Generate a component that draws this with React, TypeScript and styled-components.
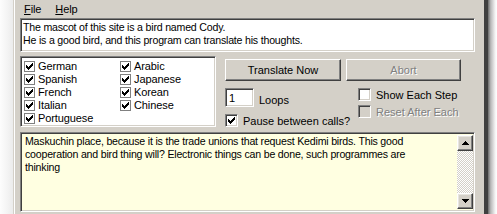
import React from 'react';
import styled, { createGlobalStyle, css } from 'styled-components';

const GlobalStyle = createGlobalStyle`
  html, body {
    margin: 0;
    padding: 0;
    background: #fff;
    overflow: hidden;
  }
  body {
    font-family: "Liberation Sans", Arial, sans-serif;
    font-size: 11px;
    color: #000;
  }
`;

const sunken = css`
  border: 1px solid;
  border-color: #808080 #fff #fff #808080;
  box-shadow: inset 1px 1px #404040, inset -1px -1px #d4d0c8;
`;

const raised = css`
  border: 1px solid;
  border-color: #fff #404040 #404040 #fff;
  box-shadow: inset -1px -1px #808080;
`;

const Page = styled.div`
  display: flex;
  width: 497px;
  height: 214px;
  overflow: hidden;
`;

const LeftFade = styled.div`
  width: 13px;
  flex: none;
  background: linear-gradient(to right, #fdfdfd, #ececec);
`;

const Shadow = styled.div`
  flex: 1;
  background: linear-gradient(to right, #6a6a6a, #b8b8b8 30%, #f4f4f4 80%, #fff);
`;

const Window = styled.div`
  width: 462px;
  flex: none;
  background: #d4d0c8;
  border-left: 1px solid #d4d0c8;
  box-shadow: inset 1px 0 #fff;
  border-right: 4px solid #404040;
  padding: 0 2px 0 6px;
  display: flex;
  flex-direction: column;
`;

const MenuBar = styled.div`
  height: 19px;
  display: flex;
  align-items: center;
  gap: 14px;
  padding-left: 4px;
  margin-top: -1px;
`;

const MenuItem = styled.span`
  letter-spacing: -0.1px;
  u {
    text-decoration: underline;
  }
`;

const TextBox = styled.div`
  ${sunken};
  background: #fff;
  height: 34px;
  width: 455px;
  box-sizing: border-box;
  padding: 2px 2px;
  font-size: 10.6px;
  line-height: 13px;
  letter-spacing: -0.2px;
`;

const Middle = styled.div`
  display: flex;
  margin-top: 4px;
  gap: 9px;
`;

const ListBox = styled.div`
  ${sunken};
  background: #fff;
  width: 196px;
  height: 71px;
  box-sizing: border-box;
  padding: 3px 2px 0 3px;
  display: grid;
  grid-template-columns: 96px 96px;
  grid-auto-rows: 13px;
`;

const ListItem = styled.label`
  display: flex;
  align-items: center;
  gap: 3px;
  line-height: 13px;
  letter-spacing: -0.1px;
`;

const FlatBox = styled.span`
  width: 11px;
  height: 11px;
  box-sizing: border-box;
  border: 1px solid #808080;
  background: #fff;
  display: flex;
  align-items: center;
  justify-content: center;
  flex: none;
`;

const ClassicBox = styled.span<{ $disabled?: boolean }>`
  ${sunken};
  width: 13px;
  height: 13px;
  box-sizing: border-box;
  background: ${(p) => (p.$disabled ? '#d4d0c8' : '#fff')};
  display: flex;
  align-items: center;
  justify-content: center;
  flex: none;
`;

const Controls = styled.div`
  display: flex;
  flex-direction: column;
  padding-top: 3px;
`;

const ButtonRow = styled.div`
  display: flex;
  gap: 5px;
`;

const Button = styled.button<{ $w: number }>`
  ${raised};
  width: ${(p) => p.$w}px;
  height: 22px;
  background: #d4d0c8;
  font: inherit;
  color: #000;
  padding: 0;
  &:disabled {
    color: #808080;
    text-shadow: 1px 1px #fff;
  }
`;

const Options = styled.div`
  display: flex;
  margin-top: 7px;
`;

const OptCol = styled.div<{ $w: number }>`
  width: ${(p) => p.$w}px;
  display: flex;
  flex-direction: column;
`;

const LoopsRow = styled.div`
  display: flex;
  align-items: center;
  gap: 5px;
  height: 19px;
`;

const LoopsInput = styled.div`
  ${sunken};
  background: #fff;
  width: 29px;
  height: 19px;
  box-sizing: border-box;
  padding: 2px 3px;
  line-height: 14px;
`;

const LoopsLabel = styled.span`
  padding-top: 5px;
`;

const CheckRow = styled.label<{ $disabled?: boolean; $top: number }>`
  display: flex;
  align-items: center;
  gap: 5px;
  height: 13px;
  margin-top: ${(p) => p.$top}px;
  color: ${(p) => (p.$disabled ? '#808080' : '#000')};
  text-shadow: ${(p) => (p.$disabled ? '1px 1px #fff' : 'none')};
`;

const Output = styled.div`
  ${sunken};
  margin-top: 5px;
  width: 455px;
  height: 80px;
  box-sizing: border-box;
  background: #ffffe1;
  display: flex;
  padding: 2px 1px 2px 2px;
`;

const OutputText = styled.div`
  flex: 1;
  padding: 0 18px 0 2px;
  font-size: 10.6px;
  line-height: 13px;
  letter-spacing: -0.2px;
`;

const ScrollBar = styled.div`
  width: 16px;
  flex: none;
  display: flex;
  flex-direction: column;
`;

const ScrollTrack = styled.div`
  flex: 1;
  background: repeating-conic-gradient(#d4d0c8 0 25%, #fff 0 50%) 0 0 / 2px 2px;
`;

const ScrollButton = styled.div`
  ${raised};
  box-shadow: inset -1px -1px #808080, inset 1px 1px #e8e6e0;
  width: 16px;
  height: 16px;
  box-sizing: border-box;
  background: #d4d0c8;
  display: flex;
  align-items: center;
  justify-content: center;
`;

const Check = ({ color = '#000' }: { color?: string }) => (
  <svg width="7" height="7" viewBox="0 0 7 7">
    <path d="M0 2h1v1h1v1h1V3h1V2h1V1h1V0h1v3H6v1H5v1H4v1H3v1H2V6H1V5H0z" fill={color} />
  </svg>
);

const Arrow = ({ up }: { up?: boolean }) => (
  <svg width="7" height="4" viewBox="0 0 7 4">
    <path d={up ? 'M3 0h1v1h1v1h1v1h1v1H0V3h1V2h1V1h1z' : 'M0 0h7v1H6v1H5v1H4v1H3V3H2V2H1V1H0z'} fill="#000" />
  </svg>
);

const languages = ['German', 'Arabic', 'Spanish', 'Japanese', 'French', 'Korean', 'Italian', 'Chinese', 'Portuguese'];

export default function App(): React.ReactElement {
  return (
    <Page>
      <GlobalStyle />
      <LeftFade />
      <Window>
        <MenuBar>
          <MenuItem>
            <u>F</u>ile
          </MenuItem>
          <MenuItem>
            <u>H</u>elp
          </MenuItem>
        </MenuBar>
        <TextBox>
          The mascot of this site is a bird named Cody.
          <br />
          He is a good bird, and this program can translate his thoughts.
        </TextBox>
        <Middle>
          <ListBox>
            {languages.map((lang) => (
              <ListItem key={lang}>
                <FlatBox>
                  <Check />
                </FlatBox>
                {lang}
              </ListItem>
            ))}
          </ListBox>
          <Controls>
            <ButtonRow>
              <Button $w={116}>Translate Now</Button>
              <Button $w={115} disabled>
                Abort
              </Button>
            </ButtonRow>
            <Options>
              <OptCol $w={133}>
                <LoopsRow>
                  <LoopsInput>1</LoopsInput>
                  <LoopsLabel>Loops</LoopsLabel>
                </LoopsRow>
                <CheckRow $top={7}>
                  <ClassicBox>
                    <Check />
                  </ClassicBox>
                  Pause between calls?
                </CheckRow>
              </OptCol>
              <OptCol $w={110}>
                <CheckRow $top={0}>
                  <ClassicBox />
                  Show Each Step
                </CheckRow>
                <CheckRow $top={4} $disabled>
                  <ClassicBox $disabled />
                  Reset After Each
                </CheckRow>
              </OptCol>
            </Options>
          </Controls>
        </Middle>
        <Output>
          <OutputText>
            Maskuchin place, because it is the trade unions that request Kedimi birds. This good cooperation and bird
            thing will? Electronic things can be done, such programmes are thinking
          </OutputText>
          <ScrollBar>
            <ScrollButton>
              <Arrow up />
            </ScrollButton>
            <ScrollTrack />
            <ScrollButton>
              <Arrow />
            </ScrollButton>
          </ScrollBar>
        </Output>
      </Window>
      <Shadow />
    </Page>
  );
}
